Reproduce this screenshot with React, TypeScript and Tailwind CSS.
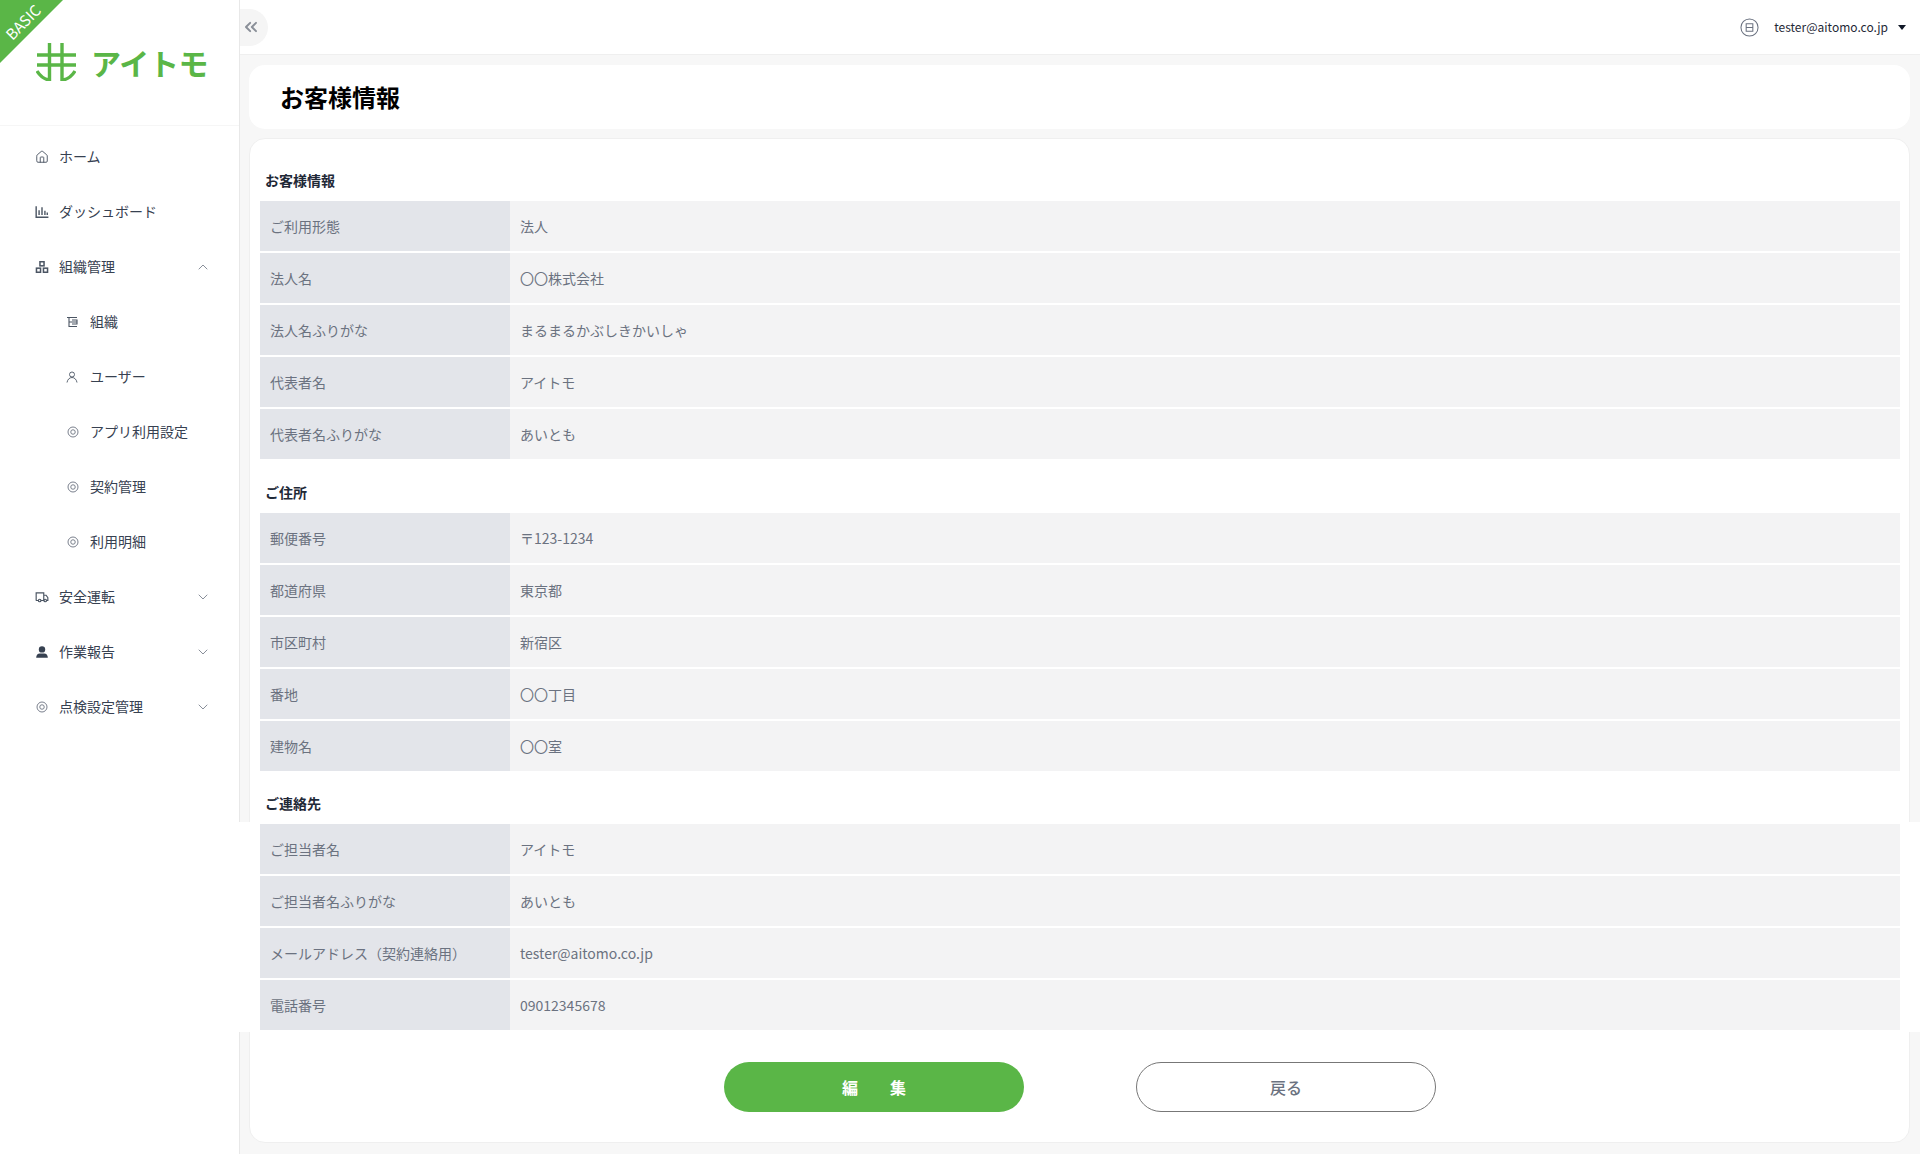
import { ChevronDown, ChevronUp, ChevronsLeft, House } from "lucide-react";
import type { ReactNode } from "react";

const fontStack = { fontFamily: '"Noto Sans CJK JP", "Noto Sans", sans-serif' };

function Target() {
  return (
    <svg viewBox="0 0 24 24" className="ml-[1px] h-3 w-3" fill="none" stroke="#6b7280" strokeWidth="1.8">
      <circle cx="12" cy="12" r="10" />
      <circle cx="12" cy="12" r="4.500" />
    </svg>
  );
}

const iconProps = { className: "h-3.5 w-3.5", fill: "none", stroke: "#4b5563", strokeWidth: 1.6, viewBox: "0 0 24 24" };

const BarsIcon = () => (
  <svg {...iconProps}>
    <path d="M2 2v19h21M7 17V9M12 17V4M17 17v-7M21 17v-4" strokeWidth="2.4" />
  </svg>
);
const OrgIcon = () => (
  <svg {...iconProps}>
    <rect x="8.500" y="3" width="7" height="7" strokeWidth="2.6" />
    <rect x="2.500" y="14" width="7" height="7" strokeWidth="2.6" />
    <rect x="14.500" y="14" width="7" height="7" strokeWidth="2.6" />
  </svg>
);
const TreeIcon = () => (
  <svg {...iconProps} className="h-3 w-3">
    <path d="M2 3h20M6 3v18h16M6 12h16M12 8h10v8H12" strokeWidth="2.200" />
  </svg>
);
const UserLine = () => (
  <svg {...iconProps} className="h-3 w-3" strokeWidth={1.800}>
    <circle cx="12" cy="7" r="5" />
    <path d="M2 23c1-6 5-10 10-10s9 4 10 10" />
  </svg>
);
const TruckIcon = () => (
  <svg {...iconProps} strokeWidth={2}>
    <path d="M6 18H3a1 1 0 0 1-1-1V5h13v13h-5M15 9h4l3 4v5h-2" />
    <circle cx="8" cy="18" r="2.200" />
    <circle cx="17.500" cy="18" r="2.200" />
  </svg>
);
const UserSolid = () => (
  <svg viewBox="0 0 24 24" className="h-3.5 w-3.5" fill="#374151">
    <circle cx="12" cy="7.500" r="5.500" />
    <path d="M2 22c0-5 3-7.500 6-7.500h8c3 0 6 2.500 6 7.500z" />
  </svg>
);

function NavItem({
  icon,
  label,
  sub,
  chevron,
}: {
  icon: ReactNode;
  label: string;
  sub?: boolean;
  chevron?: "up" | "down";
}) {
  return (
    <div className={`flex h-[55px] items-center text-[14px] text-[#374151] ${sub ? "pl-[66px]" : "pl-[35px]"} pr-[28px]`}>
      <span className="flex w-[24px] shrink-0 items-center">{icon}</span>
      <span className="flex-1">{label}</span>
      {chevron === "up" && <ChevronUp className="h-4 w-4 text-[#6b7280]" strokeWidth={1.2} />}
      {chevron === "down" && <ChevronDown className="h-4 w-4 text-[#6b7280]" strokeWidth={1.2} />}
    </div>
  );
}

function Sidebar() {
  return (
    <aside className="relative w-[240px] shrink-0 border-r border-[#e8e8e8] bg-white">
      <div className="absolute left-0 top-0 h-[63px] w-[63px] bg-[#5ab647] [clip-path:polygon(0_0,100%_0,0_100%)]" />
      <span className="absolute left-[1px] top-[14px] w-[44px] -rotate-45 text-center text-[15px] leading-[16px] text-white">
        BASIC
      </span>
      <div className="flex h-[126px] items-start border-b border-[#f6f6f6] pl-[36px] pt-[43px]">
        <svg viewBox="0 0 40 38" className="h-[38px] w-[40px]" fill="none" stroke="#5ab647" strokeWidth="3.4">
          <path d="M13.500 0v38M26 0v38M1 12h39M1 22h39M1 28c3 5 7 8 12 9M39 28c-3 5-7 8-12 9" />
        </svg>
        <span className="ml-[15px] mt-[-3px] text-[30px] font-bold leading-[44px] tracking-[-0.01em] text-[#5ab647]">
          アイトモ
        </span>
      </div>
      <nav className="pt-[3px]">
        <NavItem icon={<House className="h-3.5 w-3.5 text-[#4b5563]" strokeWidth={1.6} />} label="ホーム" />
        <NavItem icon={<BarsIcon />} label="ダッシュボード" />
        <NavItem icon={<OrgIcon />} label="組織管理" chevron="up" />
        <NavItem sub icon={<TreeIcon />} label="組織" />
        <NavItem sub icon={<UserLine />} label="ユーザー" />
        <NavItem sub icon={<Target />} label="アプリ利用設定" />
        <NavItem sub icon={<Target />} label="契約管理" />
        <NavItem sub icon={<Target />} label="利用明細" />
        <NavItem icon={<TruckIcon />} label="安全運転" chevron="down" />
        <NavItem icon={<UserSolid />} label="作業報告" chevron="down" />
        <NavItem icon={<Target />} label="点検設定管理" chevron="down" />
      </nav>
    </aside>
  );
}

function Header() {
  return (
    <header className="flex h-[55px] items-center justify-between border-b border-[#efefef] bg-white pr-[14px]">
      <div className="flex h-[37px] w-[28px] items-center rounded-r-full bg-[#f5f5f5] pl-[1px]">
        <ChevronsLeft className="h-5 w-5 text-[#8a8f98]" strokeWidth={2.4} />
      </div>
      <div className="flex items-center text-[12px] text-[#1f2937]">
        <svg viewBox="0 0 20 20" className="mr-[15px] h-[19px] w-[19px]" fill="none" stroke="#6b7280" strokeWidth="1.100">
          <circle cx="10" cy="10" r="9" />
          <path d="M6.500 6h7v8h-7zM6.500 10h7" />
        </svg>
        <span>tester@aitomo.co.jp</span>
        <span className="ml-[10px] h-0 w-0 border-x-[4px] border-t-[5px] border-x-transparent border-t-[#111827]" />
      </div>
    </header>
  );
}

function Section({
  title,
  rows,
  titleClass,
}: {
  title: string;
  rows: [string, string][];
  titleClass: string;
}) {
  return (
    <section>
      <h2 className={`pl-[5px] text-[14px] font-bold leading-[20px] text-[#1f2937] ${titleClass}`}>{title}</h2>
      <div className="relative z-20 flex flex-col gap-[2px]">
        {rows.map(([k, v]) => (
          <div key={k} className="flex h-[50px] items-center text-[14px] text-[#6b7280]">
            <div className="flex h-full w-[250px] shrink-0 items-center bg-[#e3e5ea] pl-[10px]">{k}</div>
            <div className="flex h-full flex-1 items-center bg-[#f3f3f4] pl-[10px]">{v}</div>
          </div>
        ))}
      </div>
    </section>
  );
}

export default function App() {
  return (
    <div className="relative flex h-[1154px] w-[1920px] overflow-hidden bg-[#f7f7f7]" style={fontStack}>
      <Sidebar />
      <main className="flex flex-1 flex-col">
        <Header />
        <div className="ml-[9px] mr-[10px] mt-[10px] flex h-[64px] items-center rounded-2xl bg-white pl-[31px]">
          <h1 className="text-[24px] font-bold text-black">お客様情報</h1>
        </div>
        <div className="ml-[9px] mr-[10px] mt-[9px] flex h-[1005px] flex-col rounded-2xl border border-[#efefef] bg-white pl-[10px] pr-[9px]">
          <Section
            title="お客様情報"
            titleClass="pt-[31px] pb-[11px]"
            rows={[
              ["ご利用形態", "法人"],
              ["法人名", "〇〇株式会社"],
              ["法人名ふりがな", "まるまるかぶしきかいしゃ"],
              ["代表者名", "アイトモ"],
              ["代表者名ふりがな", "あいとも"],
            ]}
          />
          <Section
            title="ご住所"
            titleClass="pt-[23px] pb-[11px]"
            rows={[
              ["郵便番号", "〒123-1234"],
              ["都道府県", "東京都"],
              ["市区町村", "新宿区"],
              ["番地", "〇〇丁目"],
              ["建物名", "〇〇室"],
            ]}
          />
          <Section
            title="ご連絡先"
            titleClass="pt-[22px] pb-[11px]"
            rows={[
              ["ご担当者名", "アイトモ"],
              ["ご担当者名ふりがな", "あいとも"],
              ["メールアドレス（契約連絡用）", "tester@aitomo.co.jp"],
              ["電話番号", "09012345678"],
            ]}
          />
          <div className="relative z-20 mt-[32px] flex justify-center gap-[112px]">
            <button className="h-[50px] w-[300px] rounded-full bg-[#5ab647] text-[16px] font-bold text-white">編　　集</button>
            <button className="h-[50px] w-[300px] rounded-full border border-[#777] bg-white text-[16px] font-medium text-[#6b7280]">戻る</button>
          </div>
        </div>
      </main>
      {/* blank strip across the capture */}
      <div className="absolute inset-x-0 top-[822px] z-10 h-[210px] bg-white" />
    </div>
  );
}
